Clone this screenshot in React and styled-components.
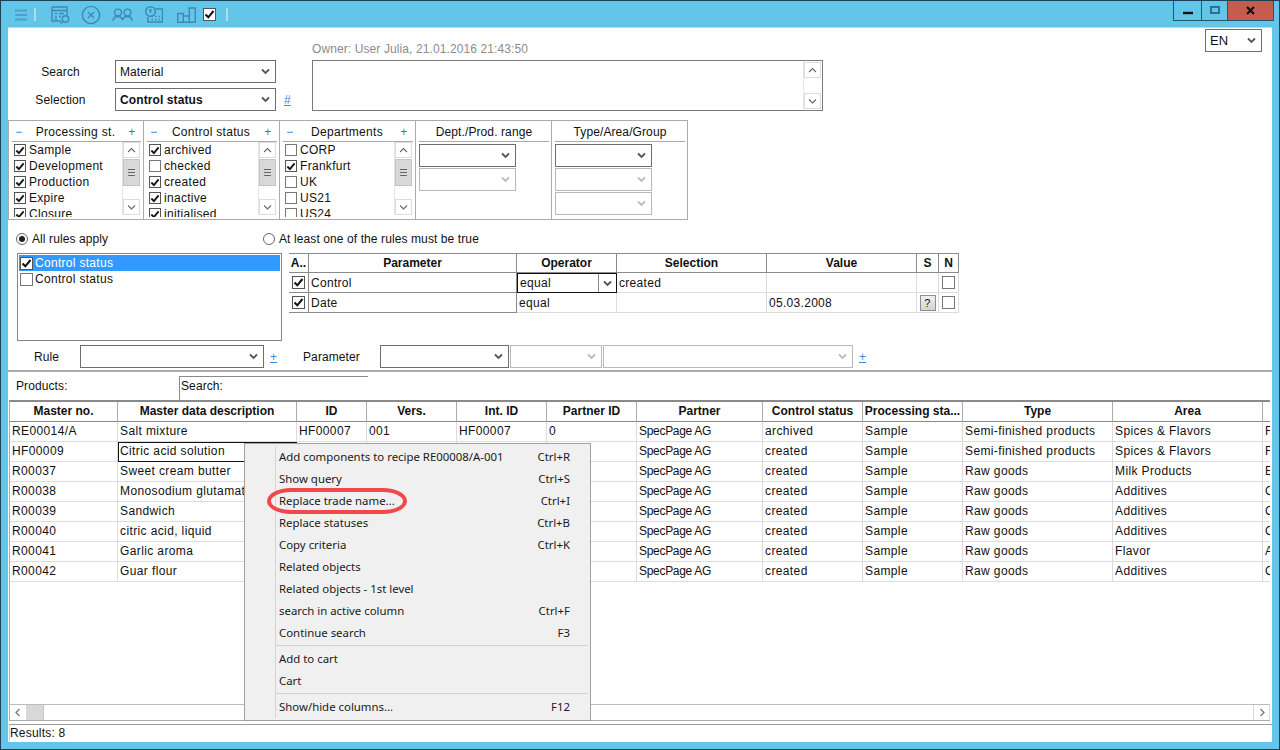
import React from "react";
import styled, { createGlobalStyle } from "styled-components";

const GlobalStyle = createGlobalStyle`
  html, body { margin: 0; padding: 0; background: #63c6e9; }
  body { font-family: "Liberation Sans", Arial, sans-serif; font-size: 12px; color: #111; letter-spacing: 0.1px; }
  *, *::before, *::after { box-sizing: border-box; }
`;

const Window = styled.div`
  position: relative;
  width: 1280px;
  height: 750px;
  border: 1px solid #1c4254;
  background: #63c6e9;
  display: flex;
  flex-direction: column;
  overflow: hidden;
`;

const TitleBar = styled.div`
  height: 27px;
  display: flex;
  align-items: flex-start;
  padding-left: 14px;
`;

const Tools = styled.div`
  height: 27px;
  display: flex;
  align-items: center;
`;

const ToolIcon = styled.svg`
  display: block;
  margin-left: ${(p) => p.$ml || 0}px;
  fill: none;
  stroke: #3f87b8;
  stroke-width: 1.4;
`;

const ToolSep = styled.span`
  width: 2px;
  height: 13px;
  background: #a9deef;
  margin-left: ${(p) => p.$ml}px;
`;

const WinButtons = styled.div`
  margin-left: auto;
  margin-right: 5px;
  display: flex;
  height: 21px;
  margin-top: -1px;
`;

const WinButton = styled.div`
  width: ${(p) => p.$w}px;
  height: 21px;
  border: 1px solid #24566b;
  border-left-width: ${(p) => (p.$first ? 1 : 0)}px;
  background: ${(p) => p.$bg || "transparent"};
  display: flex;
  align-items: center;
  justify-content: center;
`;

const Content = styled.div`
  flex: 1;
  margin: 0 7px 7px;
  background: #fff;
  box-shadow: 0 -1px 0 #a9deef;
  display: flex;
  flex-direction: column;
  min-height: 0;
`;

const TopForm = styled.div`
  height: 92px;
  display: flex;
  align-items: flex-start;
`;

const SearchFields = styled.div`
  display: grid;
  grid-template-columns: 105px 161px 28px;
  column-gap: 2px;
  row-gap: 5px;
  align-items: center;
  padding-top: 32px;
`;

const FieldLabel = styled.div`
  text-align: center;
`;

const SelectBox = styled.div`
  width: ${(p) => (p.$w ? `${p.$w}px` : "100%")};
  height: 23px;
  flex: none;
  border: 1px solid ${(p) => (p.$disabled ? "#b9b9b9" : "#6e6e6e")};
  background: #fff;
  display: flex;
  align-items: center;
  justify-content: space-between;
  padding: 0 5px 0 4px;
  font-weight: ${(p) => (p.$bold ? "bold" : "normal")};
  font-size: ${(p) => (p.$big ? 13 : 12)}px;
  color: #111;
`;

const LinkMark = styled.a`
  color: #3d8bd8;
  text-decoration: underline;
  font-size: 12px;
  margin-left: 6px;
`;

const OwnerBlock = styled.div`
  margin-left: 6px;
  padding-top: 14px;
`;

const OwnerText = styled.div`
  color: #8c8c8c;
  height: 18px;
  line-height: 14px;
`;

const NoteBox = styled.div`
  width: 511px;
  height: 51px;
  border: 1px solid #7a7a7a;
  display: flex;
  justify-content: flex-end;
  padding: 1px;
`;

const LangWrap = styled.div`
  margin-left: auto;
  margin-right: 10px;
  margin-top: 1px;
`;

const FilterRow = styled.div`
  height: 100px;
  display: flex;
`;

const FilterBox = styled.div`
  width: ${(p) => p.$w}px;
  height: 100px;
  border: 1px solid #ababab;
  border-left-width: ${(p) => (p.$first ? 1 : 0)}px;
  display: flex;
  flex-direction: column;
  overflow: hidden;
`;

const FilterHead = styled.div`
  height: 21px;
  flex: none;
  margin: 0 2px 0 3px;
  border-bottom: 1px solid #ababab;
  display: flex;
  align-items: center;
  justify-content: ${(p) => (p.$plain ? "center" : "space-between")};
  padding: ${(p) => (p.$plain ? "2px 0 0" : "2px 5px 0 3px")};
  letter-spacing: ${(p) => (p.$plain ? "0.1px" : "0.3px")};
`;

const Pm = styled.span`
  color: #2f7fd0;
  font-size: 12px;
  width: 8px;
  text-align: center;
`;

const FilterBody = styled.div`
  flex: 1;
  display: flex;
  min-height: 0;
  padding: 0 3px 0 3px;
`;

const CheckRows = styled.div`
  flex: 1;
  overflow: hidden;
  height: 75px;
`;

const CheckRow = styled.div`
  height: 16px;
  display: flex;
  align-items: center;
  padding-left: 2px;
  gap: 3px;
  white-space: nowrap;
  letter-spacing: 0.3px;
  & > span:first-child {
    width: 12px;
    height: 12px;
  }
`;

const Box = styled.span`
  width: 13px;
  height: 13px;
  flex: none;
  border: 1px solid ${(p) => (p.$checked ? "#555" : "#777")};
  background: #fff;
  display: flex;
  align-items: center;
  justify-content: center;
`;

const VScroll = styled.div`
  width: 18px;
  flex: none;
  height: ${(p) => p.$h}px;
  display: flex;
  flex-direction: column;
  border-left: 1px solid #e6e6e6;
`;

const ScrollBtn = styled.div`
  height: 16px;
  flex: none;
  border: 1px solid #dcdcdc;
  display: flex;
  align-items: center;
  justify-content: center;
`;

const ScrollThumb = styled.div`
  height: 27px;
  flex: none;
  margin-top: 1px;
  background: #d8d8d8;
  border: 1px solid #c4c4c4;
  display: flex;
  flex-direction: column;
  align-items: center;
  justify-content: center;
  gap: 2px;
`;

const Grip = styled.span`
  width: 7px;
  height: 1px;
  background: #666;
`;

const Spacer = styled.div`
  flex: 1;
`;

const ComboStack = styled.div`
  display: flex;
  flex-direction: column;
  gap: 1px;
  padding: 2px 0 0 3px;
  width: 100px;
`;

const RadioRow = styled.div`
  height: 16px;
  margin-top: 11px;
  padding-left: 8px;
  display: flex;
  align-items: center;
`;

const RadioItem = styled.label`
  width: ${(p) => p.$w}px;
  display: flex;
  align-items: center;
  gap: 4px;
`;

const RadioDot = styled.span`
  width: 12px;
  height: 12px;
  border-radius: 50%;
  border: 1px solid #666;
  display: flex;
  align-items: center;
  justify-content: center;
  &::after {
    content: "";
    width: 6px;
    height: 6px;
    border-radius: 50%;
    background: ${(p) => (p.$on ? "#222" : "transparent")};
  }
`;

const RulesRow = styled.div`
  margin-top: 6px;
  padding-left: 9px;
  display: flex;
  align-items: flex-start;
  gap: 7px;
`;

const RuleList = styled.div`
  width: 265px;
  height: 88px;
  border: 1px solid #858585;
  padding: 1px;
`;

const RuleItem = styled.div`
  height: 16px;
  display: flex;
  align-items: center;
  gap: 2px;
  padding-left: 1px;
  letter-spacing: 0.3px;
  background: ${(p) => (p.$selected ? "#3399ff" : "#fff")};
  color: ${(p) => (p.$selected ? "#fff" : "#111")};
`;

const paramCols = "20px 208px 100px 150px 150px 22px 20px";

const ParamTable = styled.div`
  width: 670px;
`;

const ParamRow = styled.div`
  display: grid;
  grid-template-columns: ${paramCols};
  height: 20px;
`;

const ParamHead = styled.div`
  border-top: 1px solid #8a8a8a;
  border-bottom: 1px solid #8a8a8a;
  border-right: 1px solid #8a8a8a;
  font-weight: bold;
  letter-spacing: 0;
  display: flex;
  align-items: center;
  justify-content: center;
  white-space: nowrap;
  overflow: hidden;
`;

const ParamCell = styled.div`
  border-bottom: 1px solid ${(p) => (p.$dark ? "#8a8a8a" : "#dcdcdc")};
  border-right: 1px solid ${(p) => (p.$dark ? "#8a8a8a" : "#dcdcdc")};
  display: flex;
  align-items: center;
  justify-content: ${(p) => (p.$center ? "center" : "flex-start")};
  padding-left: ${(p) => (p.$center ? 0 : 2)}px;
  letter-spacing: 0.3px;
`;

const EditorCell = styled.div`
  border: 1px solid #111;
  display: flex;
  align-items: center;
  justify-content: space-between;
  padding-left: 2px;
  letter-spacing: 0.3px;
`;

const EditorArrow = styled.span`
  width: 18px;
  height: 100%;
  border-left: 1px solid #8a8a8a;
  display: flex;
  align-items: center;
  justify-content: center;
`;

const HelpButton = styled.div`
  width: 16px;
  height: 16px;
  border: 1px solid #8f8f8f;
  background: linear-gradient(#efefef, #d4d4d4);
  display: flex;
  align-items: center;
  justify-content: center;
  font-size: 11px;
`;

const BuilderRow = styled.div`
  height: 23px;
  margin-top: 4px;
  display: flex;
  align-items: center;
`;

const BuilderLabel = styled.div`
  width: ${(p) => p.$w}px;
  padding-left: ${(p) => p.$pl}px;
  flex: none;
`;

const AddMark = styled(LinkMark)`
  margin-right: ${(p) => p.$mr || 0}px;
  width: 8px;
  flex: none;
`;

const Divider = styled.div`
  height: 2px;
  margin-top: 2px;
  background: #ababab;
  flex: none;
`;

const ProductsRow = styled.div`
  height: 28px;
  flex: none;
  display: flex;
  align-items: flex-end;
  padding-left: 8px;
`;

const ProductsLabel = styled.div`
  width: 163px;
  height: 28px;
  line-height: 28px;
`;

const SearchBox = styled.div`
  width: 189px;
  height: 24px;
  border-top: 1px solid #8a8a8a;
  border-left: 1px solid #8a8a8a;
  padding: 3px 0 0 1px;
  line-height: 13px;
`;

const GridFrame = styled.div`
  flex: none;
  height: 321px;
  width: 1261px;
  margin-left: 1px;
  border-top: 2px solid #8a8a8a;
  border-left: 1px solid #ababab;
  border-bottom: 1px solid #ababab;
  display: flex;
  flex-direction: column;
`;

const GridBody = styled.div`
  flex: 1;
  overflow: hidden;
  min-height: 0;
`;

const cols = "108px 179px 70px 90px 90px 90px 126px 100px 100px 150px 150px 100px";

const GridRow = styled.div`
  display: grid;
  grid-template-columns: ${cols};
  height: 20px;
  width: 1353px;
`;

const HeadCell = styled.div`
  border-right: 1px solid #ababab;
  border-bottom: 1px solid #8a8a8a;
  font-weight: bold;
  letter-spacing: 0;
  text-align: center;
  line-height: 19px;
  white-space: nowrap;
  overflow: hidden;
`;

const Cell = styled.div`
  border-right: 1px solid #dcdcdc;
  border-bottom: 1px solid #dcdcdc;
  padding-left: 2px;
  line-height: 18px;
  letter-spacing: ${(p) => (p.$tight ? "-0.3px" : "0.38px")};
  white-space: nowrap;
  overflow: hidden;
`;

const FocusCell = styled(Cell)`
  border: 1px solid #111;
  padding-left: 1px;
  line-height: 17px;
`;

const HScroll = styled.div`
  height: 16px;
  flex: none;
  border-top: 1px solid #bcbcbc;
  display: flex;
`;

const HBtn = styled.div`
  width: 17px;
  border-right: 1px solid #d8d8d8;
  border-left: ${(p) => (p.$end ? "1px solid #d8d8d8" : "0")};
  display: flex;
  align-items: center;
  justify-content: center;
`;

const HThumb = styled.div`
  width: 17px;
  background: #d8d8d8;
  border-right: 1px solid #c4c4c4;
`;

const StatusBar = styled.div`
  height: 18px;
  margin-top: 3px;
  flex: none;
  border-top: 1px solid #9a9a9a;
  border-left: 1px solid #cfcfcf;
  margin-left: 1px;
  line-height: 17px;
  letter-spacing: 0.2px;
`;

const Menu = styled.div`
  position: absolute;
  left: 243px;
  top: 442px;
  width: 347px;
  height: 278px;
  background: #f0f0f0;
  border: 1px solid #a0a0a0;
  padding: 2px 2px 2px 0;
  font-family: "Noto Sans", "Open Sans", sans-serif;
  font-size: 11.4px;
  letter-spacing: 0;
  color: #1a1a1a;
  &::before {
    content: "";
    position: absolute;
    left: 30px;
    top: 2px;
    bottom: 2px;
    width: 1px;
    background: #d4d4d4;
  }
`;

const MenuItem = styled.div`
  position: relative;
  height: 22px;
  display: flex;
  align-items: center;
  justify-content: space-between;
  padding: 0 18px 2px 34px;
  white-space: nowrap;
  ${(p) =>
    p.$circled &&
    `&::after {
      content: "";
      position: absolute;
      left: 22px;
      top: -2px;
      width: 140px;
      height: 26px;
      border: 4px solid #f2484c;
      border-radius: 24px / 13px;
    }`}
`;

const MenuSep = styled.div`
  height: 1px;
  margin: 1px 0 2px 30px;
  background: #d0d0d0;
`;

const Chevron = ({ dir = "down", color = "#555", weight = 1.8 }) => {
  const d = {
    down: "M1 1.5 L4.5 5 L8 1.5",
    up: "M1 5 L4.5 1.5 L8 5",
    left: "M5.5 1 L2 4.5 L5.5 8",
    right: "M2.5 1 L6 4.5 L2.5 8",
  }[dir];
  const vertical = dir === "down" || dir === "up";
  return (
    <svg width={vertical ? 9 : 8} height={vertical ? 7 : 9} fill="none" stroke={color} strokeWidth={weight}>
      <path d={d} />
    </svg>
  );
};

const Tick = () => (
  <svg width="11" height="11" viewBox="0 0 11 11" fill="none" stroke="#111" strokeWidth="2">
    <path d="M1.5 5.5 L4.3 8.3 L9.5 2" />
  </svg>
);

const Check = ({ on }) => <Box $checked={on}>{on && <Tick />}</Box>;

const Select = ({ children, disabled, ...rest }) => (
  <SelectBox $disabled={disabled} {...rest}>
    <span>{children}</span>
    <Chevron color={disabled ? "#bbb" : "#555"} />
  </SelectBox>
);

const ScrollColumn = ({ h, thumb }) => (
  <VScroll $h={h}>
    <ScrollBtn>
      <Chevron dir="up" color="#666" weight={1.1} />
    </ScrollBtn>
    {thumb && (
      <ScrollThumb>
        <Grip />
        <Grip />
        <Grip />
      </ScrollThumb>
    )}
    <Spacer />
    <ScrollBtn>
      <Chevron dir="down" color="#666" weight={1.1} />
    </ScrollBtn>
  </VScroll>
);

const filters = [
  {
    title: "Processing st.",
    items: [["Sample", 1], ["Development", 1], ["Production", 1], ["Expire", 1], ["Closure", 1]],
  },
  {
    title: "Control status",
    items: [["archived", 1], ["checked", 0], ["created", 1], ["inactive", 1], ["initialised", 1]],
  },
  {
    title: "Departments",
    items: [["CORP", 0], ["Frankfurt", 1], ["UK", 0], ["US21", 0], ["US24", 0]],
  },
];

const heads = [
  "Master no.", "Master data description", "ID", "Vers.", "Int. ID", "Partner ID", "Partner",
  "Control status", "Processing sta...", "Type", "Area", "",
];

const rows = [
  ["RE00014/A", "Salt mixture", "HF00007", "001", "HF00007", "0", "archived", "Semi-finished products", "Spices & Flavors", "F"],
  ["HF00009", "Citric acid solution", "", "", "", "", "created", "Semi-finished products", "Spices & Flavors", "F"],
  ["R00037", "Sweet cream butter", "", "", "", "", "created", "Raw goods", "Milk Products", "E"],
  ["R00038", "Monosodium glutamate", "", "", "", "", "created", "Raw goods", "Additives", "C"],
  ["R00039", "Sandwich", "", "", "", "", "created", "Raw goods", "Additives", "C"],
  ["R00040", "citric acid, liquid", "", "", "", "", "created", "Raw goods", "Additives", "C"],
  ["R00041", "Garlic aroma", "", "", "", "", "created", "Raw goods", "Flavor", "A"],
  ["R00042", "Guar flour", "", "", "", "", "created", "Raw goods", "Additives", "C"],
];

const menuTop = [
  ["Add components to recipe RE00008/A-001", "Ctrl+R"],
  ["Show query", "Ctrl+S"],
  ["Replace trade name...", "Ctrl+I", true],
  ["Replace statuses", "Ctrl+B"],
  ["Copy criteria", "Ctrl+K"],
  ["Related objects", ""],
  ["Related objects - 1st level", ""],
  ["search in active column", "Ctrl+F"],
  ["Continue search", "F3"],
];

const MenuRow = ({ item }) => (
  <MenuItem $circled={item[2]}>
    <span>{item[0]}</span>
    <span>{item[1]}</span>
  </MenuItem>
);

export default function App() {
  return (
    <Window>
      <GlobalStyle />
      <TitleBar>
        <Tools>
          <ToolIcon width="12" height="12" viewBox="0 0 12 12" style={{ stroke: "#4f9fcc", strokeWidth: 2 }}>
            <path d="M0 1.5H12M0 6H12M0 10.5H12" />
          </ToolIcon>
          <ToolSep $ml={7} />
          <ToolIcon $ml={15} width="20" height="18" viewBox="0 0 20 18">
            <path d="M1 1H16V9M10 15H1V1M1 4.5H16" />
            <path d="M4 7.5H6M8 7.5H13M4 10.5H6M8 10.5H10M4 13H6" />
            <circle cx="14.5" cy="13" r="3.2" />
            <path d="M12 15.5L9.5 17.5" />
          </ToolIcon>
          <ToolIcon $ml={10} width="20" height="20" viewBox="0 0 20 20">
            <circle cx="10" cy="10" r="8.6" />
            <path d="M7 7L13 13M13 7L7 13" />
          </ToolIcon>
          <ToolIcon $ml={11} width="21" height="14" viewBox="0 0 21 14">
            <circle cx="6" cy="4.5" r="3.4" />
            <circle cx="15.5" cy="4.5" r="3.4" />
            <path d="M1 13C1 10 3 8.5 6 8.5C8.5 8.5 10 10 10.5 12C11 10 12.5 8.5 15.5 8.5C18 8.5 20 10 20 13" />
          </ToolIcon>
          <ToolIcon $ml={12} width="18" height="17" viewBox="0 0 18 17">
            <circle cx="5.5" cy="5.5" r="4.8" />
            <path d="M5.5 3V6.5" strokeWidth="2" />
            <path d="M10.5 3H17.5V16H3V11" />
            <path d="M6.5 10.5H8M10 10.5H11.5M13.5 10.5H15M6.5 13.5H8M10 13.5H11.5M13.5 13.5H15" strokeWidth="1.6" />
          </ToolIcon>
          <ToolIcon $ml={14} width="19" height="16" viewBox="0 0 19 16">
            <path d="M.7 6.5H6.3V15.3H.7ZM6.3 9H12.3V15.3H6.3ZM12.3 1H18.3V15.3H12.3Z" />
          </ToolIcon>
          <Box $checked style={{ marginLeft: 7 }}>
            <Tick />
          </Box>
          <ToolSep $ml={10} />
        </Tools>
        <WinButtons>
          <WinButton $w={29} $first>
            <svg width="10" height="12">
              <path d="M0 8H10" stroke="#111" strokeWidth="2.4" />
            </svg>
          </WinButton>
          <WinButton $w={26}>
            <svg width="10" height="9" fill="none">
              <rect x="1" y="1" width="8" height="6" stroke="#2b6f92" strokeWidth="2" />
            </svg>
          </WinButton>
          <WinButton $w={46} $bg="#c75b50">
            <svg width="9" height="9">
              <path d="M1 1L8 8M8 1L1 8" stroke="#111" strokeWidth="2.2" />
            </svg>
          </WinButton>
        </WinButtons>
      </TitleBar>

      <Content>
        <TopForm>
          <SearchFields>
            <FieldLabel>Search</FieldLabel>
            <Select>Material</Select>
            <span />
            <FieldLabel>Selection</FieldLabel>
            <Select $bold>Control status</Select>
            <LinkMark>#</LinkMark>
          </SearchFields>
          <OwnerBlock>
            <OwnerText>Owner: User Julia, 21.01.2016 21:43:50</OwnerText>
            <NoteBox>
              <ScrollColumn h={47} />
            </NoteBox>
          </OwnerBlock>
          <LangWrap>
            <Select $w={57} $big>EN</Select>
          </LangWrap>
        </TopForm>

        <FilterRow>
          {filters.map((f, i) => (
            <FilterBox key={f.title} $w={136} $first={i === 0}>
              <FilterHead>
                <Pm>−</Pm>
                <span>{f.title}</span>
                <Pm>+</Pm>
              </FilterHead>
              <FilterBody>
                <CheckRows>
                  {f.items.map(([label, on]) => (
                    <CheckRow key={label}>
                      <Check on={!!on} />
                      {label}
                    </CheckRow>
                  ))}
                </CheckRows>
                <ScrollColumn h={73} thumb />
              </FilterBody>
            </FilterBox>
          ))}
          <FilterBox $w={136}>
            <FilterHead $plain>Dept./Prod. range</FilterHead>
            <ComboStack>
              <Select />
              <Select disabled />
            </ComboStack>
          </FilterBox>
          <FilterBox $w={136}>
            <FilterHead $plain>Type/Area/Group</FilterHead>
            <ComboStack>
              <Select />
              <Select disabled />
              <Select disabled />
            </ComboStack>
          </FilterBox>
        </FilterRow>

        <RadioRow>
          <RadioItem $w={247}>
            <RadioDot $on />
            All rules apply
          </RadioItem>
          <RadioItem $w={300}>
            <RadioDot />
            At least one of the rules must be true
          </RadioItem>
        </RadioRow>

        <RulesRow>
          <RuleList>
            <RuleItem $selected>
              <Check on />
              Control status
            </RuleItem>
            <RuleItem>
              <Check />
              Control status
            </RuleItem>
          </RuleList>
          <ParamTable>
            <ParamRow>
              <ParamHead>A..</ParamHead>
              <ParamHead>Parameter</ParamHead>
              <ParamHead>Operator</ParamHead>
              <ParamHead>Selection</ParamHead>
              <ParamHead>Value</ParamHead>
              <ParamHead>S</ParamHead>
              <ParamHead>N</ParamHead>
            </ParamRow>
            <ParamRow>
              <ParamCell $dark $center><Check on /></ParamCell>
              <ParamCell $dark>Control</ParamCell>
              <EditorCell>
                equal
                <EditorArrow><Chevron /></EditorArrow>
              </EditorCell>
              <ParamCell>created</ParamCell>
              <ParamCell />
              <ParamCell />
              <ParamCell $center><Check /></ParamCell>
            </ParamRow>
            <ParamRow>
              <ParamCell $dark $center><Check on /></ParamCell>
              <ParamCell $dark>Date</ParamCell>
              <ParamCell>equal</ParamCell>
              <ParamCell />
              <ParamCell>05.03.2008</ParamCell>
              <ParamCell $center><HelpButton>?</HelpButton></ParamCell>
              <ParamCell $center><Check /></ParamCell>
            </ParamRow>
          </ParamTable>
        </RulesRow>

        <BuilderRow>
          <BuilderLabel $w={72} $pl={26}>Rule</BuilderLabel>
          <Select $w={184} />
          <AddMark $mr={25}>+</AddMark>
          <BuilderLabel $w={77} $pl={0}>Parameter</BuilderLabel>
          <Select $w={129} />
          <Select $w={92} disabled style={{ marginLeft: 1 }} />
          <Select $w={250} disabled style={{ marginLeft: 1 }} />
          <AddMark>+</AddMark>
        </BuilderRow>

        <Divider />

        <ProductsRow>
          <ProductsLabel>Products:</ProductsLabel>
          <SearchBox>Search:</SearchBox>
        </ProductsRow>

        <GridFrame>
          <GridBody>
            <GridRow>
              {heads.map((h, i) => (
                <HeadCell key={i}>{h}</HeadCell>
              ))}
            </GridRow>
            {rows.map((r, i) => (
              <GridRow key={r[0]}>
                <Cell>{r[0]}</Cell>
                {i === 1 ? <FocusCell>{r[1]}</FocusCell> : <Cell>{r[1]}</Cell>}
                <Cell>{r[2]}</Cell>
                <Cell>{r[3]}</Cell>
                <Cell>{r[4]}</Cell>
                <Cell>{r[5]}</Cell>
                <Cell $tight>SpecPage AG</Cell>
                <Cell>{r[6]}</Cell>
                <Cell>Sample</Cell>
                <Cell>{r[7]}</Cell>
                <Cell>{r[8]}</Cell>
                <Cell>{r[9]}</Cell>
              </GridRow>
            ))}
          </GridBody>
          <HScroll>
            <HBtn><Chevron dir="left" color="#777" weight={1.2} /></HBtn>
            <HThumb />
            <Spacer />
            <HBtn $end><Chevron dir="right" color="#777" weight={1.2} /></HBtn>
          </HScroll>
        </GridFrame>

        <StatusBar>Results: 8</StatusBar>
      </Content>

      <Menu>
        {menuTop.map((m) => (
          <MenuRow key={m[0]} item={m} />
        ))}
        <MenuSep />
        <MenuRow item={["Add to cart", ""]} />
        <MenuRow item={["Cart", ""]} />
        <MenuSep />
        <MenuRow item={["Show/hide columns...", "F12"]} />
      </Menu>
    </Window>
  );
}
